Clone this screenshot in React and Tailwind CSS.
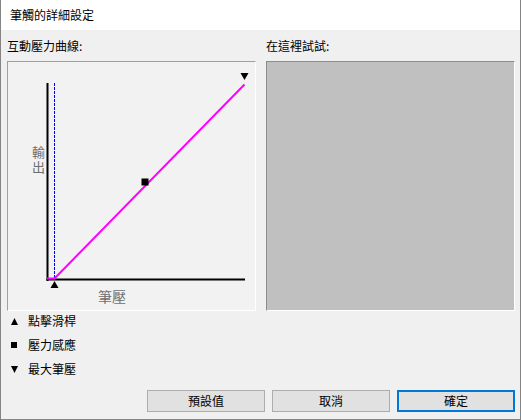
import React from 'react';

const font = { fontFamily: '"Noto Sans CJK TC", "Noto Sans", sans-serif' };

function CurveChart() {
  // page coordinates, box interior starts at (8,62)
  return (
    <svg width="248" height="248" viewBox="0 0 248 248" className="block">
      <g transform="translate(-8,-62)">
        <line x1="47.5" y1="83" x2="47.5" y2="281" stroke="#000" strokeWidth="2" />
        <line x1="46.5" y1="279.5" x2="245" y2="279.5" stroke="#000" strokeWidth="2" />
        <line x1="54.5" y1="83" x2="54.5" y2="279" stroke="#0000ff" strokeWidth="1" strokeDasharray="3 1" />
        <line x1="47" y1="278.5" x2="55" y2="278.5" stroke="#ff00ff" strokeWidth="2" />
        <line x1="54" y1="279" x2="244.5" y2="84.5" stroke="#ff00ff" strokeWidth="2" />
        <rect x="141.5" y="178.5" width="7" height="7" fill="#000" />
        <polygon points="54.5,281 50.5,288 58.5,288" fill="#000" />
        <polygon points="240.5,73 248.5,73 244.5,80" fill="#000" />
        <text x="112" y="302" textAnchor="middle" fontSize="14" fill="#6e6e6e" style={font}>筆壓</text>
      </g>
    </svg>
  );
}

const legends = [
  { icon: 'up', label: '點擊滑桿' },
  { icon: 'square', label: '壓力感應' },
  { icon: 'down', label: '最大筆壓' },
];

function LegendIcon({ kind }) {
  if (kind === 'square') {
    return <span className="block w-[6px] h-[6px] bg-black" />;
  }
  return (
    <svg width="7" height="7" viewBox="0 0 7 7" className="block">
      {kind === 'up'
        ? <polygon points="3.5,0 7,7 0,7" fill="#000" />
        : <polygon points="0,0 7,0 3.5,7" fill="#000" />}
    </svg>
  );
}

export default function App() {
  return (
    <div
      className="w-[521px] h-[420px] flex flex-col bg-[#f0f0f0] border-x border-b border-[#848484] text-[12px] text-black"
      style={font}
    >
      <div className="h-[30px] shrink-0 bg-white flex items-center pl-[9px]">筆觸的詳細設定</div>

      <div className="flex gap-[10px] pl-[6px] pt-[8px]">
        <div className="w-[249px]">
          <div className="h-[16px] leading-[16px] mb-[7px]">互動壓力曲線:</div>
          <div className="relative h-[250px] border border-t-[#a0a0a0] border-l-[#a0a0a0] border-r-white border-b-white bg-[#f2f2f2]">
            <CurveChart />
            <div className="absolute left-[22px] top-[84px] text-[13px] leading-[16px] tracking-[2px] text-[#6e6e6e] [writing-mode:vertical-rl]">
              輸出
            </div>
          </div>
        </div>
        <div className="w-[249px]">
          <div className="h-[16px] leading-[16px] mb-[7px]">在這裡試試:</div>
          <div className="h-[250px] border border-t-[#8c8c8c] border-l-[#8c8c8c] border-r-white border-b-white bg-[#c0c0c0]" />
        </div>
      </div>

      <div className="flex flex-col gap-[8px] mt-[2px] pl-[10px]">
        {legends.map(l => (
          <div key={l.label} className="h-[16px] flex items-center">
            <div className="w-[17px] flex items-center">
              <LegendIcon kind={l.icon} />
            </div>
            <span className="leading-[16px]">{l.label}</span>
          </div>
        ))}
      </div>

      <div className="flex justify-end gap-[7px] mt-[13px] pr-[5px]">
        <button className="w-[118px] h-[22px] border border-[#adadad] bg-[#e1e1e1] leading-none">預設值</button>
        <button className="w-[118px] h-[22px] border border-[#adadad] bg-[#e1e1e1] leading-none">取消</button>
        <button className="w-[118px] h-[22px] border-2 border-[#0078d7] bg-[#e1e1e1] leading-none">確定</button>
      </div>
    </div>
  );
}
